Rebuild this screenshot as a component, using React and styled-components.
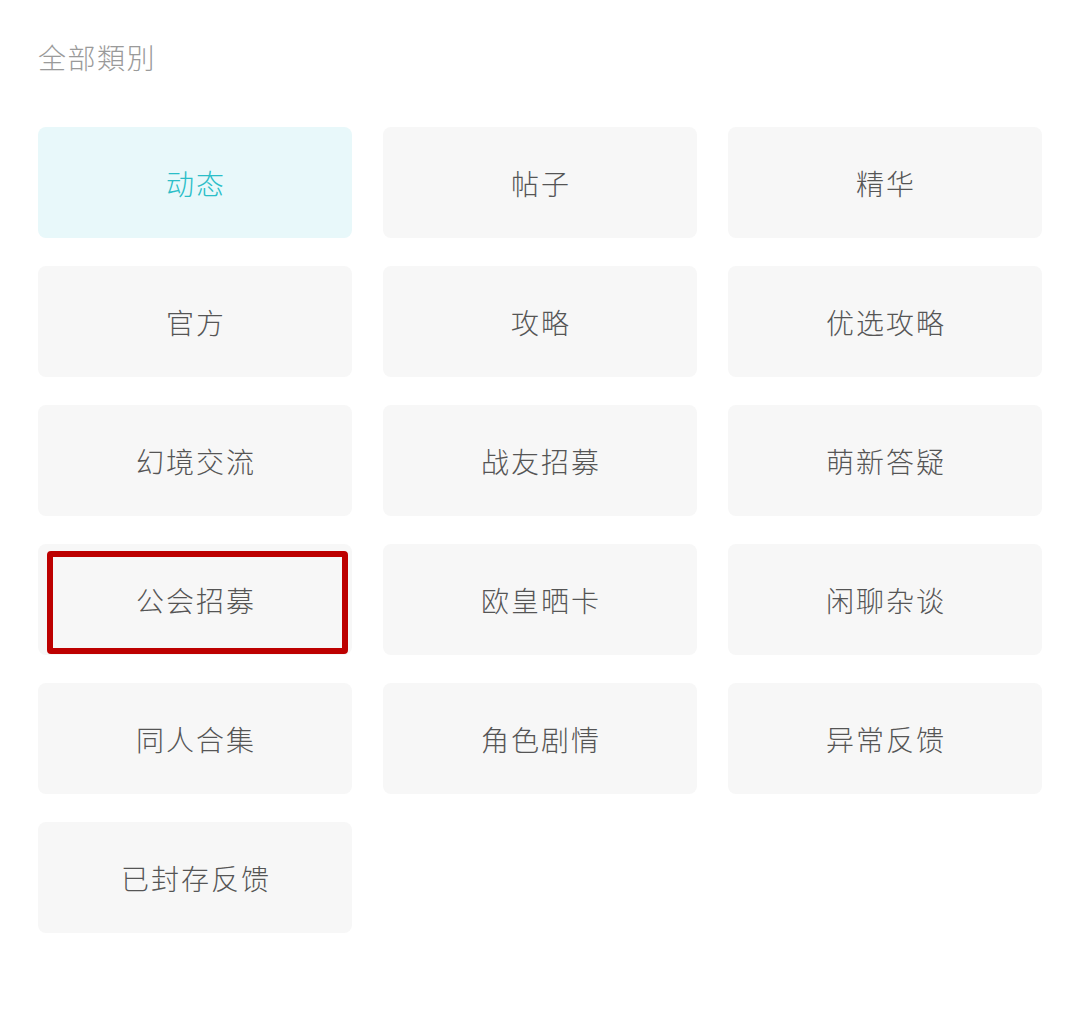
import React from "react";
import styled, { createGlobalStyle } from "styled-components";

const GlobalStyle = createGlobalStyle`
  html, body {
    margin: 0;
    padding: 0;
    background: #ffffff;
    font-family: "Noto Sans CJK SC", "Noto Sans", sans-serif;
  }
`;

const Page = styled.div`
  width: 1080px;
  min-height: 1016px;
  box-sizing: border-box;
  padding: 37px 38px 0;
  background: #ffffff;
`;

const Title = styled.div`
  font-size: 28px;
  line-height: 40px;
  color: #9a9a9a;
  letter-spacing: 1.5px;
  font-weight: 300;
`;

const Grid = styled.div`
  margin-top: 50px;
  display: grid;
  grid-template-columns: repeat(3, 314px);
  column-gap: 31px;
  row-gap: 28px;
`;

const Cell = styled.div`
  position: relative;
  height: 111px;
  border-radius: 8px;
  display: flex;
  align-items: center;
  justify-content: center;
  padding-left: 2px;
  font-size: 28px;
  font-weight: 300;
  letter-spacing: 2px;
  background: ${(p) => (p.$active ? "#e8f8fa" : "#f7f7f7")};
  color: ${(p) => (p.$active ? "#2bbec8" : "#555555")};
`;

const Highlight = styled.div`
  position: absolute;
  left: 9px;
  top: 7px;
  right: 4px;
  bottom: 1px;
  border: 6px solid #bd0000;
  border-radius: 4px;
  pointer-events: none;
`;

const categories = [
  "动态",
  "帖子",
  "精华",
  "官方",
  "攻略",
  "优选攻略",
  "幻境交流",
  "战友招募",
  "萌新答疑",
  "公会招募",
  "欧皇晒卡",
  "闲聊杂谈",
  "同人合集",
  "角色剧情",
  "异常反馈",
  "已封存反馈",
];

export default function App() {
  return (
    <>
      <GlobalStyle />
      <Page>
        <Title>全部類別</Title>
        <Grid>
          {categories.map((name, i) => (
            <Cell key={name} $active={i === 0}>
              {name}
              {name === "公会招募" && <Highlight />}
            </Cell>
          ))}
        </Grid>
      </Page>
    </>
  );
}
